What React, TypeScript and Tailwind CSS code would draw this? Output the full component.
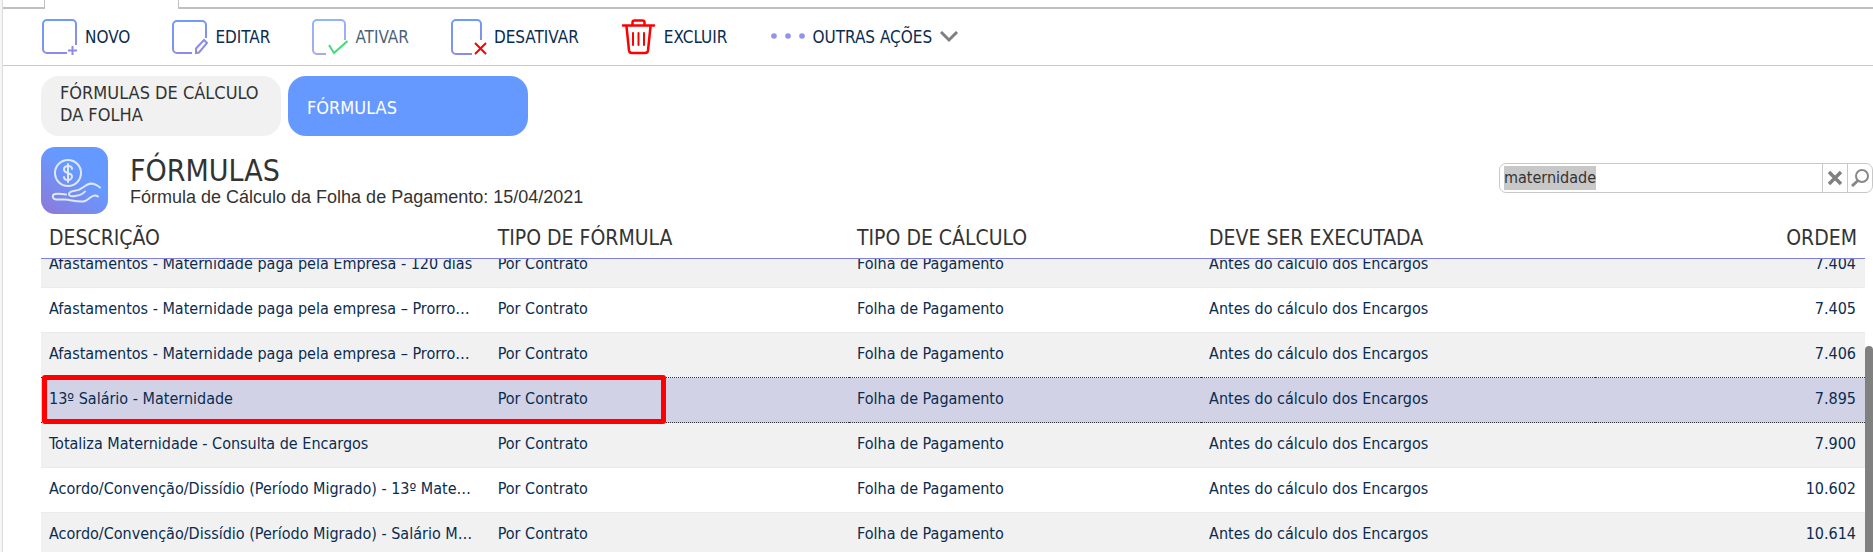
import { useEffect, useRef, type ReactNode } from "react";
import clsx from "clsx";

const columns = [
  { key: "descricao", label: "DESCRIÇÃO" },
  { key: "tipoFormula", label: "TIPO DE FÓRMULA" },
  { key: "tipoCalculo", label: "TIPO DE CÁLCULO" },
  { key: "execucao", label: "DEVE SER EXECUTADA" },
  { key: "ordem", label: "ORDEM" },
];

const rows = [
  { descricao: "Afastamentos - Maternidade paga pela Empresa - 120 dias", ordem: "7.404" },
  { descricao: "Afastamentos - Maternidade paga pela empresa – Prorrogação", ordem: "7.405" },
  { descricao: "Afastamentos - Maternidade paga pela empresa – Prorrogação", ordem: "7.406" },
  { descricao: "13º Salário - Maternidade", ordem: "7.895", selected: true },
  { descricao: "Totaliza Maternidade - Consulta de Encargos", ordem: "7.900" },
  { descricao: "Acordo/Convenção/Dissídio (Período Migrado) - 13º Maternidade", ordem: "10.602" },
  { descricao: "Acordo/Convenção/Dissídio (Período Migrado) - Salário Maternidade", ordem: "10.614" },
];

function IconGradient() {
  return (
    <svg className="absolute h-0 w-0" aria-hidden="true">
      <defs>
        <linearGradient id="stroke-blue" gradientUnits="userSpaceOnUse" x1="4" y1="0" x2="16" y2="36">
          <stop offset="0" stopColor="#6b9dff" />
          <stop offset="1" stopColor="#8f8ae6" />
        </linearGradient>
      </defs>
    </svg>
  );
}

function ToolbarIcon({ children }: { children: ReactNode }) {
  return (
    <svg className="h-9 w-9 shrink-0" viewBox="0 0 36 36" fill="none" stroke="url(#stroke-blue)" strokeWidth="2" aria-hidden="true">
      {children}
    </svg>
  );
}

function ToolbarButton({ label, icon, disabled }: { label: string; icon: ReactNode; disabled?: boolean }) {
  return (
    <button type="button" disabled={disabled} className="flex items-center gap-[7px] whitespace-nowrap text-[#0a2c50] disabled:opacity-75">
      {icon}
      <span className="pt-0.5">{label}</span>
    </button>
  );
}

function Toolbar() {
  return (
    <div className="flex h-[57px] items-center gap-[42px] border-b border-[#c8c8c8] pl-[39px] text-[17px]">
      <ToolbarButton
        label="NOVO"
        icon={
          <ToolbarIcon>
            <path d="M25 34H5a4 4 0 0 1-4-4V5a4 4 0 0 1 4-4h25a4 4 0 0 1 4 4v21" />
            <path d="M30.500 27v9M26 31.500h9" />
          </ToolbarIcon>
        }
      />
      <ToolbarButton
        label="EDITAR"
        icon={
          <ToolbarIcon>
            <path d="M20 34H5a4 4 0 0 1-4-4V6a4 4 0 0 1 4-4h25a4 4 0 0 1 4 4v13" />
            <path d="M24 34v-4.500l8-8.500 3 3-8 9.500z" />
          </ToolbarIcon>
        }
      />
      <ToolbarButton
        label="ATIVAR"
        disabled
        icon={
          <ToolbarIcon>
            <path d="M14 35H5a4 4 0 0 1-4-4V5a4 4 0 0 1 4-4h24a4 4 0 0 1 4 4v16" />
            <path d="M17 26l5 8 13.500-12" stroke="#00d24e" />
          </ToolbarIcon>
        }
      />
      <ToolbarButton
        label="DESATIVAR"
        icon={
          <ToolbarIcon>
            <path d="M21 35H5a4 4 0 0 1-4-4V5a4 4 0 0 1 4-4h21a4 4 0 0 1 4 4v16" />
            <path d="M24 24l11 11M35 24L24 35" stroke="#f00" />
          </ToolbarIcon>
        }
      />
      <ToolbarButton
        label="EXCLUIR"
        icon={
          <ToolbarIcon>
            <g stroke="#f00" strokeLinecap="round">
              <path d="M2 6.500h31M11.500 6V3.500a2 2 0 0 1 2-2h8a2 2 0 0 1 2 2V6M5.500 7.500L8 31.500a3 3 0 0 0 3 2.500h13a3 3 0 0 0 3-2.500L29.500 7.500" strokeWidth="2.500" />
              <path d="M12 14v12M17.500 14v12M23 14v12" />
            </g>
          </ToolbarIcon>
        }
      />
      <button type="button" className="flex items-center gap-[7px] whitespace-nowrap text-[#0a2c50]">
        <svg className="h-9 w-9" viewBox="0 0 36 36" fill="#8f93ea" aria-hidden="true">
          <circle cx="5" cy="17" r="2.800" />
          <circle cx="19" cy="17" r="2.800" />
          <circle cx="33" cy="17" r="2.800" />
        </svg>
        <span className="pt-0.5">OUTRAS AÇÕES</span>
        <svg className="h-3 w-5" viewBox="0 0 20 12" fill="none" stroke="#808080" strokeWidth="3" aria-hidden="true">
          <path d="M2 1l8 8 8-8" />
        </svg>
      </button>
    </div>
  );
}

function SearchBox() {
  const inputRef = useRef<HTMLInputElement>(null);

  useEffect(() => {
    inputRef.current?.select();
  }, []);

  return (
    <div className="flex h-[30px] w-[374px] rounded-[7px] border border-[#c8c8c8] text-[#333]">
      <input
        ref={inputRef}
        type="text"
        aria-label="Pesquisar"
        defaultValue="maternidade"
        className="min-w-0 flex-1 px-1 text-[16px] outline-none selection:bg-[#c8c8c8] selection:text-[#333]"
      />
      <button type="button" aria-label="Limpar" className="flex w-[25px] items-center justify-center border-l border-[#c8c8c8]">
        <svg className="h-4 w-4" viewBox="0 0 16 16" fill="none" stroke="#808080" strokeWidth="3.500" aria-hidden="true">
          <path d="M2 2l12 12M14 2L2 14" />
        </svg>
      </button>
      <button type="button" aria-label="Buscar" className="flex w-[25px] items-center justify-center border-l border-[#c8c8c8]">
        <svg className="h-[18px] w-[18px]" viewBox="0 0 18 18" fill="none" stroke="#888" strokeWidth="2" aria-hidden="true">
          <circle cx="11" cy="7" r="6" />
          <path d="M7 11.500L1 17" strokeWidth="3" />
        </svg>
      </button>
    </div>
  );
}

function ColumnWidths() {
  return (
    <colgroup>
      <col className="w-[24.6%]" />
      <col className="w-[19.7%]" />
      <col className="w-[19.3%]" />
      <col className="w-[21.6%]" />
      <col />
    </colgroup>
  );
}

function FormulasTable() {
  return (
    <div className="mr-2 ml-[38px]">
      <table className="w-full table-fixed border-collapse text-left">
        <ColumnWidths />
        <thead>
          <tr className="h-[44px] border-b border-[#8080e0] text-[21px] text-[#333]">
            {columns.map((col) => (
              <th key={col.key} className="px-2 pt-1.5 font-normal whitespace-nowrap last:text-right">
                {col.label}
              </th>
            ))}
          </tr>
        </thead>
      </table>
      {/* Linhas roladas: a primeira fica parcialmente sob o cabeçalho */}
      <div className="overflow-hidden">
        <table aria-label="Fórmulas" className="-mt-4 w-full table-fixed border-collapse text-[16px] text-[#0a2c50]">
          <ColumnWidths />
          <tbody>
            {rows.map((row, idx) => (
              <tr
                key={row.ordem}
                className={clsx(
                  "h-[45px]",
                  row.selected
                    ? "border-y border-dotted border-[#333] bg-[#d2d2e6]"
                    : !rows[idx + 1]?.selected && "border-b border-[#ebebeb]",
                  !row.selected && idx % 2 === 0 && "bg-[#f1f1f1]"
                )}
              >
                <td className="truncate pr-[14px] pb-0.5 pl-2">{row.descricao}</td>
                <td className="px-2 pb-0.5">Por Contrato</td>
                <td className="px-2 pb-0.5">Folha de Pagamento</td>
                <td className="px-2 pb-0.5">Antes do cálculo dos Encargos</td>
                <td className="pr-[9px] pb-0.5 text-right">{row.ordem}</td>
              </tr>
            ))}
          </tbody>
        </table>
      </div>
    </div>
  );
}

export default function App() {
  return (
    <div className="h-screen overflow-hidden bg-[#f5f5f5] pl-[2px] font-['DejaVu_Sans_Condensed','DejaVu_Sans',sans-serif]">
      <IconGradient />
      <div className="relative h-full border-l border-[#dcdcdc] bg-white">
        <div className="flex h-[9px]">
          <div className="w-[42px] border-r border-b-2 border-[#c0c0c0]" />
          <div className="w-[133px]" />
          <div className="flex-1 border-b-2 border-l border-[#c0c0c0]" />
        </div>
        <Toolbar />

        <nav className="flex gap-[7px] pt-[10px] pl-[38px] text-[18px] leading-[22px]">
          <a href="#calculo" className="flex h-[60px] w-[240px] items-center rounded-[18px] bg-[#f1f1f1] px-[19px] pb-1 text-[#333]">
            FÓRMULAS DE CÁLCULO DA FOLHA
          </a>
          <a href="#formulas" aria-current="page" className="flex h-[60px] w-[240px] items-center rounded-[18px] bg-[#6699ff] px-[19px] pt-1 text-white">
            FÓRMULAS
          </a>
        </nav>

        <header className="flex items-start pt-[11px] pl-[38px] text-[#333]">
          <svg className="h-[67px] w-[67px]" viewBox="0 0 67 67" fill="none" stroke="#dfe8ff" strokeWidth="2" strokeLinecap="round" strokeLinejoin="round" aria-hidden="true">
            <defs>
              <linearGradient id="tile" x1="0" y1="1" x2="0.500" y2="0.350">
                <stop offset="0" stopColor="#8f78d8" />
                <stop offset="1" stopColor="#6699ff" />
              </linearGradient>
            </defs>
            <rect width="67" height="67" rx="14" fill="url(#tile)" stroke="none" />
            <circle cx="27" cy="26" r="13" />
            <path d="M31 22c0-2-2-3-4-3s-4 1-4 3.500 2 3 4 3.500 4 1.500 4 3.500-2 3.500-4 3.500-4-1-4-3M27 17v18" />
            <path d="M59 40.500C56 38 53 36.500 50 36.500C44 37 41 43 35 43.500C31 44 28 44.500 28 47C28 49.500 31 49.500 34 49C39 48.500 42 47 44 44.500" />
            <path d="M57 49.500C55 48 52 48.500 50 50C47 52 46 54 42 54.500C33 55 29 52 22 52.500H15C11 52 11 47.500 14 47C18 46 21 47.500 25 47.500" />
          </svg>
          <div className="ml-[22px] flex-1">
            <h1 className="mt-[6px] text-[30px] leading-[36px]">FÓRMULAS</h1>
            <p className="font-['Liberation_Sans',Arial,sans-serif] text-[18px] leading-[16px]">
              Fórmula de Cálculo da Folha de Pagamento: 15/04/2021
            </p>
          </div>
          <div className="pt-4">
            <SearchBox />
          </div>
        </header>

        <FormulasTable />

        {/* Barra de rolagem e marcação da linha */}
        <div className="absolute top-[346px] right-0 bottom-0 w-2 rounded-t bg-[#808080]" />
        <div className="absolute top-[375px] left-[39px] h-[49px] w-[624px] rounded-[3px] border-5 border-[#f00]" />
      </div>
    </div>
  );
}
